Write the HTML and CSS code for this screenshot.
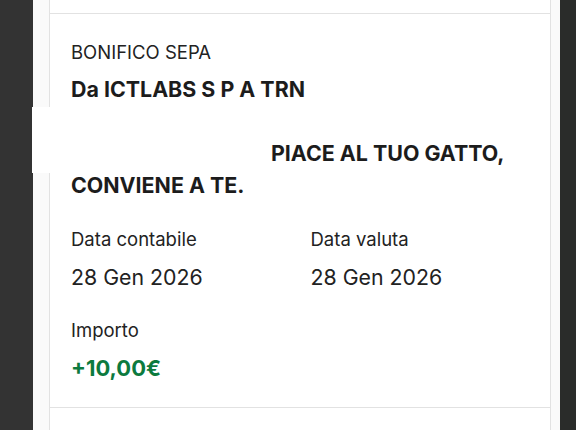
FILE: index.html
```html
<!DOCTYPE html>
<html lang="it">
<head>
<meta charset="utf-8">
<title>Dettaglio movimento</title>
<link rel="stylesheet" href="styles.css">
</head>
<body>
  <div class="rail-left"></div>
  <main class="main">
    <div class="list">
      <div class="item item-prev"></div>
      <section class="item detail">
        <div class="kind">BONIFICO SEPA</div>
        <div class="title">
          <div class="line">Da ICTLABS S P A TRN</div>
          <div class="mask"></div>
          <div class="line indent">PIACE AL TUO GATTO,</div>
          <div class="line">CONVIENE A TE.</div>
        </div>
        <div class="grid">
          <div class="field">
            <div class="label">Data contabile</div>
            <div class="value">28 Gen 2026</div>
          </div>
          <div class="field">
            <div class="label">Data valuta</div>
            <div class="value">28 Gen 2026</div>
          </div>
          <div class="field">
            <div class="label">Importo</div>
            <div class="value amount">+10,00€</div>
          </div>
        </div>
      </section>
      <div class="item item-next"></div>
    </div>
  </main>
  <div class="rail-right"></div>
</body>
</html>
```

FILE: styles.css
```css
html, body {
  margin: 0;
  padding: 0;
  height: 100%;
}
body {
  display: flex;
  font-family: Inter, "Noto Sans", "Liberation Sans", sans-serif;
  color: #222222;
  background: #fafafa;
  overflow: hidden;
}
.rail-left {
  width: 33px;
  flex: none;
  background: #333333;
}
.rail-right {
  width: 16px;
  flex: none;
  background: #2a2c2a;
}
.main {
  flex: 1;
  padding: 0 9px 0 16px;
  background: #fafafa;
}
.list {
  background: #ffffff;
  border-left: 1px solid #e2e2e2;
  border-right: 1px solid #e2e2e2;
  min-height: 100%;
}
.item {
  border-bottom: 1px solid #e2e2e2;
}
.item-prev {
  height: 13px;
}
.item-next {
  border-bottom: none;
  height: 40px;
}
.detail {
  padding: 26px 22px 25px 21px;
}
.kind {
  font-size: 18.5px;
  line-height: 24px;
  color: #222;
}
.title {
  position: relative;
  margin-top: 9px;
  font-size: 21.4px;
  font-weight: 700;
  line-height: 32px;
  color: #1c1c1c;
}
.mask {
  position: absolute;
  left: -39px;
  top: 34px;
  width: 190px;
  height: 66px;
  background: #ffffff;
}
.indent {
  margin-top: 32px;
  padding-left: 200px;
}
.grid {
  display: grid;
  grid-template-columns: 1fr 1fr;
  column-gap: 22px;
  row-gap: 27px;
  margin-top: 26px;
}
.label {
  font-size: 18.5px;
  line-height: 24px;
}
.value {
  margin-top: 12px;
  font-size: 21.3px;
  line-height: 28px;
}
.amount {
  font-size: 22px;
  font-weight: 700;
  color: #0c7a3e;
}
```
